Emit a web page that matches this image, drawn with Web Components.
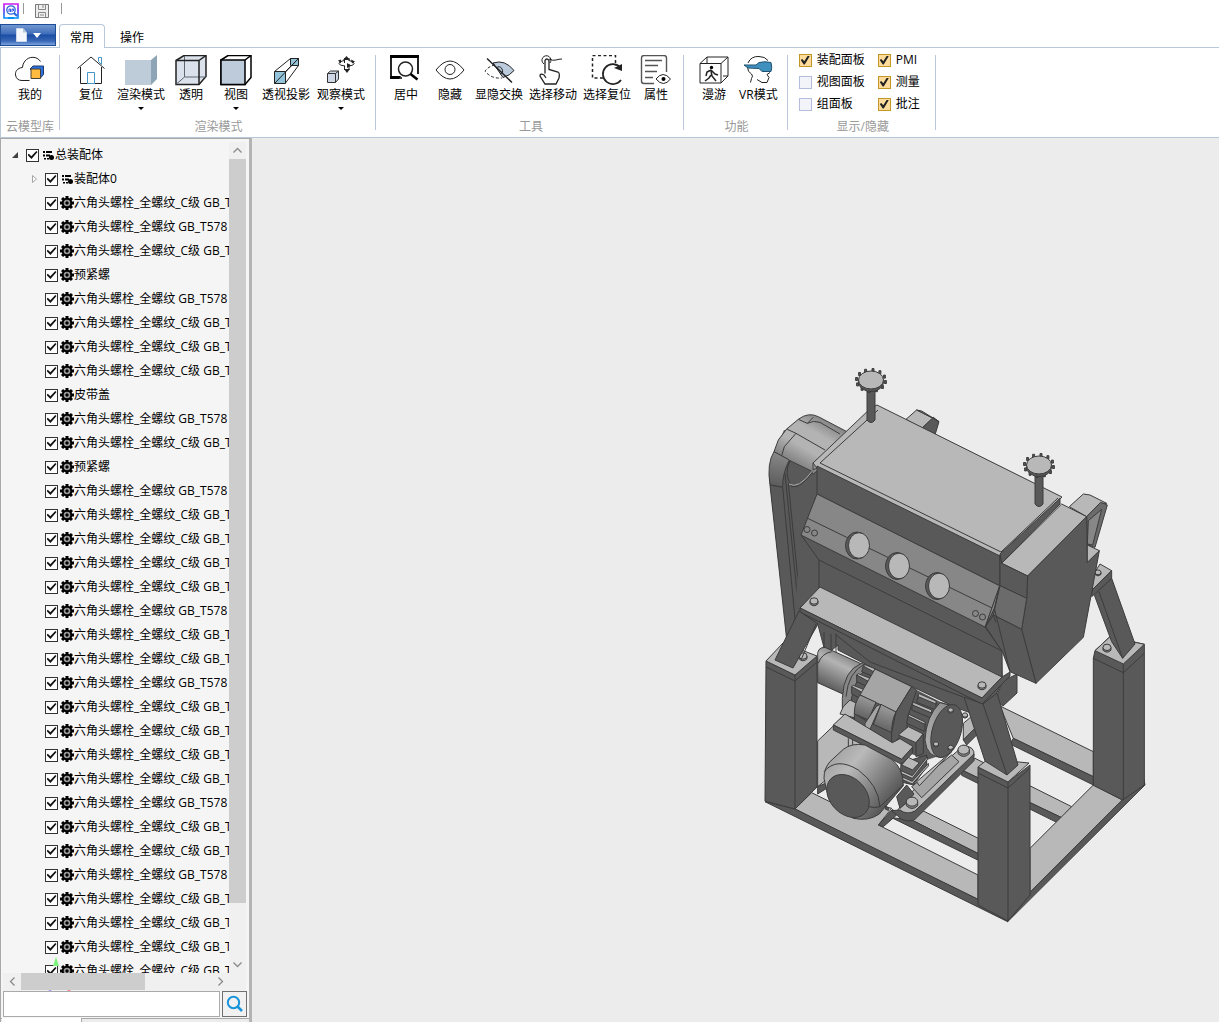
<!DOCTYPE html>
<html lang="zh-CN">
<head>
<meta charset="utf-8">
<title>装配体查看器</title>
<style>
html,body{margin:0;height:100%}
body{font:12px/16px "Open Sans","Noto Sans CJK SC",sans-serif;color:#000;background:#fff;overflow:hidden}
</style>
</head>
<body>
<cad-app></cad-app>
<script>
const define = (name, html, setup) => customElements.define(name, class extends HTMLElement {
  connectedCallback() {
    if (this.shadowRoot) return;
    const root = this.attachShadow({ mode: 'open' });
    const t = document.createElement('template');
    t.innerHTML = typeof html === 'function' ? html(this) : html;
    root.append(t.content.cloneNode(true));
    if (setup) setup(this, root);
  }
});

/* ribbon icons, each drawn on a 32x32 window of a shared sheet */
const ICONS = {
  cloud: ['14 55', `<path d="M40.500 61.500C37 56 29 56 25 61Q22.500 64 22.500 67.500C17 68 15 72 15.500 75Q16.500 80.500 22 80.500H29.500" class="l"/><path d="M30 69l3-3h10.500v8.500L40 78.500z" fill="#2a72e0" stroke="#223a66"/><path d="M31 69h9.500v9.500H31z" fill="#ffbb3f" stroke="#4a4035"/>`],
  home: ['74 55', `<path d="M76.500 68.500L90 57l13.500 11.500M79.500 67v16.500h7M93.500 83.500h7V67" class="l"/><path d="M86.500 83.500v-11h7v11zM97.500 57.500h3v7l-3-3z" fill="#fff" stroke="#4597c9"/>`],
  render: ['125 55', `<path d="M125 60h26v25h-26z" fill="#becbd9"/><path d="M151 60l6-5v24l-6 6z" fill="#8ea5b5"/>`],
  clear: ['176 55', `<path d="M177 60.500l8-5h22v21l-7 8h-23z" fill="#dbe2ec" stroke="#222" stroke-width="1.500"/><path d="M185.500 56v21H207M185.500 77l-8 7" fill="none" stroke="#5c6673"/><path d="M177 60.500h23v24M200 60.500l7-5" fill="none" stroke="#222" stroke-width="1.500"/>`],
  view: ['220 55', `<path d="M221 60l7-4.500h23v22l-6 7h-24z" fill="#fff" stroke="#000" stroke-width="1.500"/><path d="M221 60h24v24.500h-24z" fill="#becbdb" stroke="#000" stroke-width="1.500"/><path d="M245 60l6-4.500" stroke="#000" stroke-width="1.500"/>`],
  persp: ['269 55', `<path d="M273.500 71.500l16-13h8v7l-13 17.500" class="l"/><path d="M289.500 58.500h8v7h-8zM273.500 71.500h11v12h-11z" fill="#93c3d8" stroke="#222"/><path d="M273.500 83.500l24-25M284.500 71.500l13-13" class="l"/>`],
  orbit: ['325 55', `<path d="M327.500 73.500l3-2.500h8v8l-3 3.500h-8z" fill="#cfd7e6" stroke="#333"/><path d="M327.500 73.500h8v9M335.500 73.500l3-2.500" fill="none" stroke="#333"/><path d="M344 60.500q-5 1-5 3t6 2.500M349 60.500q5 1 5 3t-5 2.500M344.500 63v-5M349 58v3M344.500 66v4M349 64v6" class="l"/><path d="M343 60l3.500-4 3.500 4zM338 60.500l3-1 0 4zM351 59.500l4 2-3 2zM347 63l4 2.500-4 2.500zM344 69l3 4 3-4z" fill="#222"/>`],
  center: ['390 55', `<path d="M391 79V57h27v17M391 78h11" fill="none" stroke="#000" stroke-width="1.700"/><path d="M390 55h29v3h-29zM390 76h11l-2 3h-9z"/><circle cx="405.500" cy="69" r="7" class="l" stroke-width="1.500"/><path d="M410.500 74l7 5.500" stroke="#000" stroke-width="2.500"/>`],
  eye: ['434 55', `<path d="M436 70q14-18 28 0q-14 18-28 0z" class="l"/><circle cx="450" cy="69.500" r="5" class="l"/>`],
  swap: ['483 55', `<path d="M493 63q12-4 21 7.500q-4 5-11 7z" fill="#bccbdc" stroke="#222"/><path d="M495 65q-6 1-10 6q6 8 17 7" class="l" stroke-dasharray="3 2"/><path d="M496 68q4-3 6 1t-2 5" class="l"/><path d="M487 58.500l25 24" class="l" stroke-width="1.500"/>`],
  hand: ['537 55', `<path d="M544.500 73.500v-13q1.500-3 4 0v9l9 2.500q2 1 1 6l-3 6h-11l-5-8q0-3 4-1l2 3" transform="translate(.5)" class="l" stroke-width="1.300"/><path d="M544 64a4.500 4.500 0 1 1 6-1M549 59q4 2 7 1t6-1" class="l"/>`],
  reset: ['591 55', `<path d="M603 78h-10.500V55.500h23V66" class="l" stroke-width="1.500" stroke-dasharray="3 2.500"/><path d="M620 67a10 10 0 1 0 1 13" class="l" stroke-width="1.700"/><path d="M614 68l8-4v7z" fill="#222"/>`],
  props: ['640 55', `<path d="M654 83.500H644q-2.500 0-2.500-2.500V58q0-2.500 2.500-2.500h20q2.500 0 2.500 2.500v14" fill="none" stroke="#555" stroke-width="1.400"/><path d="M645 60.500h17M645 65.500h13M645 71.500h12M645 77.500h8" stroke="#555" stroke-width="1.400"/><path d="M656 79q7-9 14.500 0q-7 9-14.500 0z" class="l"/><circle cx="663.500" cy="79" r="2"/>`],
  roam: ['698 55', `<path d="M700 63.500l7-6.500h21v19l-7 7h-21zM700 63.500h21V83M721 63.500l7-6.500M707 57v6M728 76h-5" class="l"/><circle cx="711.500" cy="67.500" r="1.700"/><path d="M711 70l-4 2-1 4M711 70l4 4 3 1M711 71l1 5 4 5M711 75l-2 3-4 3" class="l" stroke-width="1.500"/>`],
  vr: ['743 55', `<path d="M749 63q3-7 11-6.500 6 0 9 4M748.500 67q0 5 4 7 2 2 0 4.500l-1 4M771 72.500l-3 2 2 3-2 5h-5l-5-3" class="l"/><path d="M745 65h12l3-2.500q6-1.500 12 0 1.500 5 0 9h-9l-3-3-11-.5z" fill="#3f8fbf" stroke="#20526f"/>`]
};

define('ribbon-icon', el => {
  const [at, body] = ICONS[el.getAttribute('name')];
  return `<style>:host{display:block;width:32px;height:32px}svg{display:block}.l{fill:none;stroke:#222}</style>
  <svg width="32" height="32" viewBox="${at} 32 32" aria-hidden="true">${body}</svg>`;
});

define('ribbon-button', el => `<style>
:host{display:block}
button{display:flex;flex-direction:column;align-items:center;min-width:44px;padding:0 3px;border:0;background:none;font:inherit;line-height:16px;color:#000;white-space:nowrap}
i{margin-top:4px;border:3px solid transparent;border-top-color:#000;border-bottom:0}
</style><button type="button"><ribbon-icon name="${el.getAttribute('icon')}"></ribbon-icon><slot></slot>${el.hasAttribute('menu') ? '<i></i>' : ''}</button>`);

define('ribbon-group', el => `<style>
:host{display:flex;flex-direction:column;height:75px;border-right:1px solid #b8c8da;padding:0 5px 0 8px}
:host([wide]){padding:0 7px 0 9px}
:host([narrow]){padding:0 5px}
:host([loose]){padding:0 6px 0 8px}
:host([wide]) .items{gap:1px}
.items{height:68px;display:flex;justify-content:center}
footer{color:#999;height:7px;display:flex;align-items:center;justify-content:center;white-space:nowrap}
</style><div class="items"><slot></slot></div><footer>${el.getAttribute('label')}</footer>`);

define('ribbon-check', el => `<style>
:host{display:block}
label{display:flex;align-items:center;gap:5px;height:22px;white-space:nowrap}
input{appearance:none;box-sizing:border-box;width:13px;height:13px;margin:0;border:1px solid #b5bdde;background:#f3f4fa;display:grid;place-items:center}
input:checked{border-color:#c39628;background:#ffdc9c}
input:checked::before{content:"";width:9px;height:9px;background:#222;clip-path:polygon(0 50%,18% 38%,40% 65%,80% 0,100% 8%,45% 100%,34% 100%)}
</style><label><input type="checkbox" ${el.hasAttribute('checked') ? 'checked' : ''}><slot></slot></label>`);

define('quick-bar', `<style>
:host{display:flex;align-items:flex-start;height:24px;padding:3px 3px 0;box-sizing:border-box;background:#fff}
i{width:1px;height:11px;background:#999;margin:0 11px 0 4px}
button{border:0;background:none;padding:0;height:16px;margin-right:8px}
svg{display:block}
</style>
<svg width="16" height="17" viewBox="0 0 16 17"><defs><linearGradient id="g" x2="0" y2="1"><stop stop-color="#d018f0"/><stop offset=".5" stop-color="#5a38f0"/><stop offset="1" stop-color="#0090f8"/></linearGradient></defs><path d="M1 1h14v14H1z" fill="none" stroke="url(#g)" stroke-width="1.600"/><path d="M5 14h6v2H5z" fill="#0090f8"/><circle cx="8" cy="7" r="4.200" fill="#fff" stroke="#2864d8" stroke-width="1.300"/><path d="M11 10l3 3" stroke="#2864d8" stroke-width="2"/><path d="M6 9V6h1.500v3M9 9V6h1.500v2" stroke="#3552e8" fill="none"/></svg>
<i></i>
<button type="button" aria-label="保存"><svg width="14" height="16" viewBox="0 0 14 16"><path d="M.5 1.500h13v13H.5z" fill="#eee" stroke="#777"/><path d="M3.500 1.500h7v5h-7zM3.500 9.500h7v5h-7zM8 2v3M5 12h4" fill="none" stroke="#888"/></svg></button>
<i style="margin-right:0"></i>`);

define('ribbon-tabs', `<style>
:host{display:flex;height:24px;background:#fff;border-bottom:1px solid #b8c8da;box-sizing:border-box}
button{font:inherit;border:0;background:none;padding:0}
.file{width:56px;height:22px;box-sizing:border-box;border:1px solid #1d4c98;background:linear-gradient(#7297d0,#3e6dba 45%,#1a4da4 50%,#3968b6 80%,#7aa3dd);display:flex;align-items:center;justify-content:center;gap:6px}
.tab{width:46px;height:24px;box-sizing:border-box;padding-top:4px}
.on{margin-left:3px;padding-top:3px;border:1px solid #b8c8da;border-bottom:0;border-radius:4px 4px 0 0;background:#fff}
.tab+.tab{margin-left:4px}
</style>
<button class="file" type="button" aria-label="文件"><svg width="11" height="14" viewBox="0 0 11 14"><path d="M.5.500H7l3.500 4v9H.5z" fill="#f4f7fb" stroke="#cbd8ea"/><path d="M7 .500v4h3.500" fill="#b8c7da"/></svg><svg width="8" height="5"><path d="M0 0h8L4 5z" fill="#fff"/></svg></button>
<button class="tab on" type="button">常用</button><button class="tab" type="button">操作</button>`);

define('ribbon-bar', `<style>
:host{display:block}
.panel{display:flex;height:90px;box-sizing:border-box;padding-top:7px;background:#fff;border-left:1px solid #b8c8da;border-bottom:1px solid #b8c8da}
.checks{display:grid;grid-template-columns:auto auto;column-gap:13px;margin-top:-6px;align-content:start;padding:0 10px 0 3px}
</style><ribbon-tabs></ribbon-tabs>
<div class="panel">
<ribbon-group narrow label="云模型库"><ribbon-button icon="cloud">我的</ribbon-button></ribbon-group>
<ribbon-group wide label="渲染模式"><ribbon-button icon="home">复位</ribbon-button><ribbon-button icon="render" menu>渲染模式</ribbon-button><ribbon-button icon="clear">透明</ribbon-button><ribbon-button icon="view" menu>视图</ribbon-button><ribbon-button icon="persp">透视投影</ribbon-button><ribbon-button icon="orbit" menu>观察模式</ribbon-button></ribbon-group>
<ribbon-group label="工具"><ribbon-button icon="center">居中</ribbon-button><ribbon-button icon="eye">隐藏</ribbon-button><ribbon-button icon="swap">显隐交换</ribbon-button><ribbon-button icon="hand">选择移动</ribbon-button><ribbon-button icon="reset">选择复位</ribbon-button><ribbon-button icon="props">属性</ribbon-button></ribbon-group>
<ribbon-group loose label="功能"><ribbon-button icon="roam">漫游</ribbon-button><ribbon-button icon="vr">VR模式</ribbon-button></ribbon-group>
<ribbon-group label="显示/隐藏"><div class="checks"><ribbon-check checked>装配面板</ribbon-check><ribbon-check checked>PMI</ribbon-check><ribbon-check>视图面板</ribbon-check><ribbon-check checked>测量</ribbon-check><ribbon-check>组面板</ribbon-check><ribbon-check checked>批注</ribbon-check></div></ribbon-group>
</div>`);

const teeth = Array.from({ length: 8 }, (_, i) => `<rect x="5.500" y="0" width="3" height="4" transform="rotate(${i * 45} 7 7)"/>`).join('');
const GEAR = `<svg width="14" height="14" viewBox="0 0 14 14">${teeth}<circle cx="7" cy="7" r="4.300" fill="#999" stroke="#000" stroke-width="2"/><circle cx="7" cy="7" r="1.200" stroke="#000"/></svg>`;
const LIST = `<svg width="14" height="14" viewBox="0 0 14 14"><path d="M2 3h2v2H2zM5 3h6v2H5zM2 6.500h2v2H2zM5 6.500h4v2H5zM3 10h2v1.500H3zM6 10h2v1.500H6z"/><circle cx="10.500" cy="9.500" r="2.500"/></svg>`;

define('tree-row', el => `<style>
:host{display:block}
label{display:flex;align-items:center;height:24px;padding-left:29px;white-space:nowrap}
.root{padding-left:10px}
b{flex:none;width:16px;display:flex;font-size:0}
input{appearance:none;flex:none;box-sizing:border-box;width:13px;height:13px;margin:0 2px 0 0;border:1px solid #333;background:#fff;display:grid;place-items:center}
input:checked::before{content:"";width:10px;height:8px;background:#111;clip-path:polygon(0 50%,13% 35%,38% 65%,88% 0,100% 14%,40% 100%)}
svg{display:block;flex:none}
</style><label class="${el.getAttribute('kind')}"><b>${el.getAttribute('kind') === 'root' ? '<svg width="10" height="10"><path d="M8 2v6H2z" fill="#404040"/></svg>' : el.getAttribute('kind') === 'node' ? '<svg width="10" height="10"><path d="M3.500 1.500v7l4-3.500z" fill="#fff" stroke="#a6a6a6"/></svg>' : ''}</b><input type="checkbox" checked>${el.getAttribute('kind') === 'part' ? GEAR : LIST}<span><slot></slot></span></label>`);

const NAMES = { C: '六角头螺栓_全螺纹_C级 GB_T', T: '六角头螺栓_全螺纹 GB_T578', Y: '预紧螺', P: '皮带盖' };
const rows = [...'CTCYTCCCPTCYTCCCCTCCTCCCCTCCTCCCC'].map(k => `<tree-row kind="part">${NAMES[k]}</tree-row>`).join('');

define('scroll-bar', el => {
  const v = el.hasAttribute('vertical');
  return `<style>
:host{display:flex;background:#f0f0f0;flex-direction:${v ? 'column' : 'row'}}
button{flex:none;width:17px;height:17px;padding:0;border:0;background:none;display:grid;place-items:center}
.track{flex:1;display:flex;flex-direction:inherit}
.thumb{flex:0 0 ${el.getAttribute('size')};background:#cdcdcd}
path{fill:none;stroke:#8a8a8a;stroke-width:1.300}
</style><button type="button" aria-label="后退"><svg width="9" height="9"><path d="${v ? 'M.5 6.500l4-4 4 4' : 'M6.500 .5l-4 4 4 4'}"/></svg></button><div class="track"><div class="thumb"></div></div><button type="button" aria-label="前进"><svg width="9" height="9"><path d="${v ? 'M.5 2.500l4 4 4-4' : 'M2.500 .5l4 4-4 4'}"/></svg></button>`;
});

define('tree-panel', `<style>
:host{display:flex;flex-direction:column;box-sizing:border-box;width:252px;flex:none;position:relative;background:#f5f5f5;border:1px solid #a9a9a9;border-width:1px 0 0 1px;border-right:3px solid #b4b4b4;padding:4px 3px 0 2px}
.body{flex:1;min-height:0;display:flex}
.list{flex:1;min-width:0;overflow:hidden;margin-left:-3px}
scroll-bar[vertical]{flex:none;width:17px;margin-top:-1px}
.low{display:flex;background:#f0f0f0}.low scroll-bar{flex:1;margin:0 17px 1px 1px}
form{display:flex;gap:2px;height:26px;margin:0 -1px 1px 0}
input{flex:1;min-width:0;box-sizing:border-box;border:1px solid #aaa;background:#fff;font:inherit;padding:0 4px}
form button{width:25px;padding:0;border:1px solid #707070;background:#f1f1f1;display:grid;place-items:center;flex:none}
.tabs{height:3px;margin:0 -3px 0 -2px;border-top:1px solid #a9a9a9;background:#ececec;display:flex}
.tabs i{width:79px;margin-left:1px;background:#fff;border-right:1px solid #aaa;margin-top:-1px}
.axes{position:absolute;left:44px;top:816px;pointer-events:none}
</style>
<div class="body"><div class="list"><tree-row kind="root">总装配体</tree-row><tree-row kind="node">装配体0</tree-row>${rows}</div><scroll-bar vertical size="93.4%"></scroll-bar></div>
<div class="low"><scroll-bar size="65%"></scroll-bar></div>
<form><input type="text" aria-label="搜索"><button type="button" aria-label="查找"><svg width="18" height="18" viewBox="0 0 18 18"><circle cx="7.500" cy="7.500" r="5.700" fill="none" stroke="#1893dc" stroke-width="2"/><path d="M11.500 11.500l4.500 4.500" stroke="#1893dc" stroke-width="2.500"/></svg></button></form>
<div class="tabs"><i></i></div>
<svg class="axes" width="32" height="38"><path d="M11 2l3 9H8z" fill="#7cf37c"/><path d="M3 36l2-1 2 1z" fill="#88f"/><path d="M22 36q2-2 4 0z" fill="#f77"/></svg>`);

/* stacked polygons of the machine, from the floor frame up */
const wheel = (x, y) => {
  let t = '';
  for (let i = 0; i < 12; i++) { const a = (i * 30 + 8) * Math.PI / 180; t += `<path class="d" d="M${x} ${y}m${(14.5 * Math.cos(a) - 1).toFixed(1)} ${(10.5 * Math.sin(a) - 1).toFixed(1)}h2v3h-2z"/>`; }
  return `${t}<ellipse cx="${x}" cy="${y + 2}" rx="12.500" ry="9.500" class="d"/><ellipse cx="${x}" cy="${y}" rx="12.500" ry="9" class="l"/>`;
};
const bolt = (x, y, r = 4) => `<path d="M${x - r} ${y}v${r * .7}q${r} ${r} ${2 * r} 0v-${r * .7}z" class="m"/><ellipse cx="${x}" cy="${y}" rx="${r}" ry="${r * .8}" class="l"/>`;
const hole = (x, y) => `<ellipse cx="${x - 1}" cy="${y}" rx="11.500" ry="13.500" class="d"/><ellipse cx="${x + 1}" cy="${y}" rx="10.500" ry="12.800" class="l"/>`;

define('model-view', `<style>
:host{display:block;flex:1;min-width:0;background:#ececec;overflow:hidden}
svg{display:block;width:100%;height:100%}
path,ellipse,circle{stroke:#3c3c3c;stroke-width:1;vector-effect:non-scaling-stroke;stroke-linejoin:round}
.d{fill:#595959}.l{fill:#b8b8b8}.m{fill:#878787}.n{fill:#6b6b6b}.k{fill:none}.a{fill:#a5a5a5}.s{stroke:none}
</style>
<svg viewBox="252 138 967 884" preserveAspectRatio="xMidYMid meet" role="img" aria-label="三维模型">
<defs>
<linearGradient id="motor" gradientUnits="userSpaceOnUse" x1="250" y1="340" x2="420" y2="480"><stop stop-color="#a2a2a2"/><stop offset=".3" stop-color="#bababa"/><stop offset="1" stop-color="#585858"/></linearGradient>
<linearGradient id="cyl" gradientUnits="userSpaceOnUse" x1="275" y1="45" x2="225" y2="145"><stop stop-color="#8f8f8f"/><stop offset=".25" stop-color="#b4b4b4"/><stop offset="1" stop-color="#565656"/></linearGradient>
<linearGradient id="drum" x1=".6" y1="0" x2=".3" y2="1"><stop stop-color="#a0a0a0"/><stop offset="1" stop-color="#5b5b5b"/></linearGradient>
<linearGradient id="rim" x1="0" y1="1" x2="1" y2="0"><stop stop-color="#b4b4b4"/><stop offset="1" stop-color="#8a8a8a"/></linearGradient>
<linearGradient id="cover" gradientUnits="userSpaceOnUse" x1="210" y1="170" x2="130" y2="310"><stop stop-color="#858585"/><stop offset=".3" stop-color="#b3b3b3"/><stop offset=".65" stop-color="#b3b3b3"/><stop offset="1" stop-color="#808080"/></linearGradient>
<linearGradient id="band" gradientUnits="userSpaceOnUse" x1="110" y1="210" x2="75" y2="380"><stop stop-color="#ababab"/><stop offset=".45" stop-color="#858585"/><stop offset="1" stop-color="#5b5b5b"/></linearGradient>
</defs>
<g transform="translate(860 640) scale(.333333)">
<path class="l" d="M420 198L700 335V410L460 295z"/><path class="d" d="M460 295L700 410V435L450 312z"/>
<path class="l" d="M345 355L635 500 605 533 305 390z"/><path class="d" d="M305 390L605 533 590 547 305 406z"/>
<path class="l" d="M190 513L355 595V641L155 540z"/><path class="d" d="M95 533L155 540 355 641V661z"/>
<path class="l" d="M510 625L700 435 787 480 510 757z"/><path class="d" d="M510 757L787 480 852 418 855 435 443 845V810z"/>
</g>
<g transform="translate(750 640) scale(.333333)">
<path class="l" d="M203 303L300 210 350 320 203 440z"/><path class="d" d="M203 440L225 430 230 445 203 462z"/>
<path class="l" d="M135 507L185 458 330 530 405 500 425 505 385 555 684 705V778L320 602z"/>
<path class="d" d="M45 485L135 507 684 778 773 825V845z"/><path class="d" d="M400 560L440 525 428 508 385 555z"/>
<path class="l" d="M640 250L700 200V240L640 300z"/><path class="d" d="M640 300L700 240V265L650 315z"/>
</g>

<path class="d s" d="M769 476L773 456 784 430 820 440 822 590 800 612 787 640z"/>
<g transform="translate(750 360) scale(.333333)">
<path fill="url(#cover)" d="M72 275L85 240 110 207 145 178Q175 155 205 170L285 212 330 235 240 300 190 342 115 303z"/>
<path fill="url(#band)" d="M72 275Q50 310 60 375L98 382Q97 340 118 300z"/>
<path class="d" d="M60 375L98 382 140 830 110 838z"/>
<path class="k" d="M110 207L138 220 103 260 95 287M138 220L225 270M145 178L172 190 190 172M172 190Q190 180 210 187L270 222M105 340L145 740M115 370L152 740"/>
<path class="d" d="M120 302Q100 340 125 380 155 385 188 335z"/><path fill="none" style="stroke:#aaa" d="M117 372Q145 390 188 332"/>
<path class="l" d="M468 178L500 150 550 175 515 205z"/><path class="d" d="M515 205L550 172 567 185 555 225z"/><path class="m" d="M500 150L515 153 567 185 550 175z"/>
</g>
<path class="d s" d="M801 535L817 494 1000 586 1003 680 820 600 795 608z"/>
<path class="l" d="M813 463L872 407 877 405 1062 497 1002 558 817 468z"/>
<path class="k" d="M820 463L878 410M820 463L1001 552 1058 498M813 463V470L817 468"/>
<path class="d" d="M817 466L1000 556V586L817 494z"/>
<path class="m" d="M817 494L1000 586 985 627 801 535z"/><path class="k" d="M807 518L992 608M801 535L819 560 1002 651M985 627L1002 651V680M819 560V588"/>
${hole(858, 545.5)}${hole(898, 566)}${hole(938, 586)}
<circle cx="807" cy="529.500" r="3" class="m"/><circle cx="814.500" cy="533" r="3" class="m"/><circle cx="975.500" cy="613.500" r="3" class="m"/><circle cx="982.500" cy="617" r="3" class="m"/>
<path class="d" d="M867 386h8v34q-4 5-8 0z"/>${wheel(871, 380)}
<path class="d" d="M1035 471h8v33q-4 5-8 0z"/>${wheel(1039, 465)}
<g transform="translate(930 440) scale(.333333)">
<path class="l" d="M418 200L460 162 480 165 530 190 510 190 470 230z"/><path class="n" d="M470 230L512 187 532 195 495 322 472 315z"/><path class="m" d="M475 242L515 208 488 315 472 312z"/>
<path class="l" d="M510 372L545 392 488 448 480 420z"/><path class="d" d="M545 392V415L485 470 488 448z"/>${bolt(504, 397, 9)}
<path class="d" d="M540 590L643 613V1035L578 1080 490 1036V655L495 632z"/><path class="l" d="M495 632L540 590 643 613 580 672z"/><path class="k" d="M490 655L580 698 643 640M580 672V1080"/>${bolt(531, 622, 12)}
<path class="d" d="M493 465L545 415 615 612 578 655 545 605z"/><path class="k" d="M507 455L578 655"/>
<path class="l" d="M395 192L470 230 293 408 215 370z"/><path class="d" d="M215 370L390 192V175L210 342z"/>
<path class="d" d="M293 408L470 230 472 367 508 332 460 592 318 730 275 568 290 475z"/><path class="l" d="M472 315L508 332 472 367z"/>
<path class="d" d="M210 345L215 370 293 408 290 475 210 437z"/><path class="n" d="M210 437L290 475 275 568 190 525z"/>
<path class="d" d="M190 525L275 568 318 730 240 695 217 635 167 560z"/><path class="m" d="M208 440L193 505 167 560 180 520z"/><path class="k" d="M193 505L240 695M190 525L198 548"/>
</g>
<path class="d" d="M1003 681L1017 674V693L1003 706 995 700z"/>

<path class="d" d="M800 612L982 702 1002 682 985 718 957 708 873 668 838 650 838 645 826 655 818 625z"/>
<path class="k" d="M824 632V658M831 634V655M836 634V652M835 634L870 662 963 697"/>
<g transform="translate(750 640) scale(.333333)">
<path fill="url(#cyl)" d="M203 50Q200 22 225 22L335 72 285 165 203 128z"/><path class="k" d="M205 70Q215 40 245 35"/>
<path class="d s" d="M330 75L375 90 500 150 570 185 605 195 560 350 530 360 430 320 300 230 280 200z"/>
<path class="m" d="M335 70Q280 90 277 175V205L300 215Q305 120 355 80z"/><path class="k" d="M345 72Q295 95 288 170"/>
<path class="d" d="M340 78L370 90V110L335 95zM320 105L352 118V140L320 125zM305 140L340 155 330 175 305 162z"/><path class="l" d="M340 78l5-4 32 13-7 8zM320 105l5-4 35 14-5 9zM305 140l5-4 35 14-5 9z"/>
<path class="l" d="M280 200L300 180 320 190V235L270 222z"/>
<path class="d" d="M313 220L345 240 425 275 430 325 313 260z"/>
<path class="a" d="M375 87L485 140 438 216 330 165z"/><path fill="url(#drum)" d="M330 165L378 187 355 240 313 222Q312 190 330 165z"/><path fill="url(#drum)" d="M393 193L438 216Q425 240 425 278L370 253z"/>
<path class="a" d="M380 198L393 193 360 268Q348 280 345 268V250z"/><path class="d" d="M438 216L485 140 500 150 475 225 470 270 425 315V278z"/>
<path class="d" d="M505 165L558 185V210L500 187zM488 190L545 213V235L485 210zM475 225L525 250V275L470 250z"/><path class="l" d="M505 160L558 183V192L505 170zM488 186L545 210V219L488 195zM475 222L525 246V253L475 229z"/>
<path fill="url(#rim)" d="M570 188L605 197 580 352Q530 355 525 300 528 230 570 188z"/><ellipse class="d" cx="590" cy="273" rx="43" ry="82" transform="rotate(17 590 273)"/>
${bolt(602, 210, 8)}${bolt(645, 225, 8)}${bolt(558, 312, 8)}${bolt(602, 322, 8)}
<path class="l" d="M445 285L475 260 520 282 498 308z"/><path class="d" d="M498 308L520 282V340L498 350z"/>
<path class="l" d="M250 255L285 222 427 308 450 296 490 320 455 358z"/><path class="d" d="M250 255L455 358 487 322V340L455 373 250 270z"/>
<path class="l" d="M440 515L475 540 500 515 672 345Q675 320 640 316L620 335 500 440 465 480z"/><path class="a" d="M485 440L605 345 627 365 515 473z"/><path class="d" d="M440 470L470 435 492 462 470 488 450 505z"/>
<path class="d" d="M425 512L450 510Q470 526 495 513L672 342V362L495 538Q480 548 455 538z"/>
<path class="d" d="M453 370L530 345V380L490 435 450 425z"/><path class="l" d="M455 375L475 352 508 368 488 390zM453 392L487 407 532 350V358L487 415 453 400zM453 409L487 424 535 370V378L487 432 453 417zM500 425L605 335 508 437z"/>
${bolt(486, 485, 17)}${bolt(641, 329, 17)}
<path class="k" d="M295 295V325M308 300V320"/>
<path fill="url(#motor)" d="M222 415Q222 385 240 365L280 328Q305 308 345 315L425 358Q460 385 460 437L415 490 388 522Q355 545 310 535 228 490 222 415z"/>
<path class="k" d="M222 395Q260 350 325 390 385 435 390 500M355 500Q375 505 390 500L460 435"/><ellipse class="d" cx="294" cy="468" rx="73" ry="54" transform="rotate(46 294 468)"/>
<path class="d" d="M405 498l10 5v8l-8-3z"/>
</g>

<path class="l" d="M820 587L1002 677 982 698 800 608z"/><path class="d" d="M800 608L982 698 1002 677 1010 672V676L982 704 800 612z"/>
${bolt(814, 601, 4)}${bolt(982, 685, 4)}
<path class="d" d="M766 661L795 675 817 656V787L795 809 765 801z"/><path class="l" d="M766 661L783 643 817 656 795 675z"/><path class="k" d="M766 667L795 681 817 662M795 675V809"/>${bolt(803, 656, 4)}
<path class="d" d="M799 611L818 624 793 668 775 660z"/><path class="k" d="M816 624L801 660"/>
<path class="d" d="M978 767L1008 782 1030 765V895L1008 921 978 905z"/><path class="l" d="M978 767L988 759 1029 763 1008 782z"/><path class="k" d="M978 773L1008 788 1030 768M1008 782V921"/>
<path class="d" d="M964 697L983 704 997 693 1018 765 1007 775 985 761z"/><path class="k" d="M983 704L1007 775"/>
</svg>`);

define('cad-app', `<style>
:host{display:flex;flex-direction:column;height:100vh}
main{flex:1;min-height:0;display:flex}
</style><quick-bar></quick-bar><ribbon-bar></ribbon-bar><main><tree-panel></tree-panel><model-view></model-view></main>`);
</script>
</body>
</html>
